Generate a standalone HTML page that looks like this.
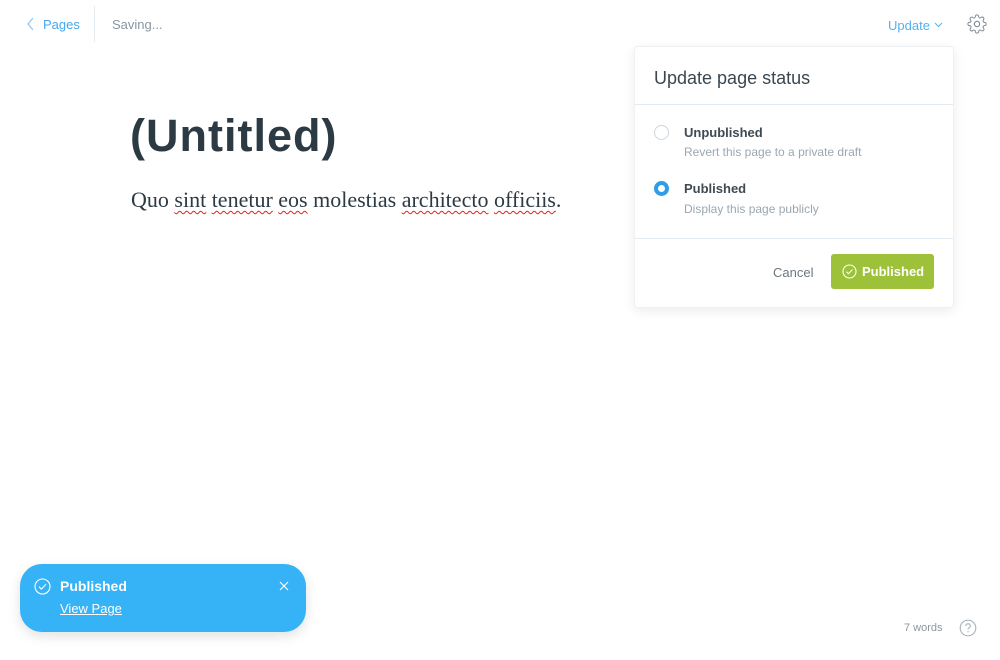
<!DOCTYPE html>
<html><head><meta charset="utf-8"><style>
*{box-sizing:border-box;margin:0;padding:0}
body{width:1000px;height:660px;background:#fff;font-family:"Liberation Sans",sans-serif;position:relative;overflow:hidden;color:#2c3a44}
.abs{position:absolute}
.sq{text-decoration:underline wavy #e02020;text-decoration-thickness:1px;text-underline-offset:3px}
</style></head><body>
<svg class="abs" style="left:26px;top:17px" width="10" height="14" viewBox="0 0 10 14"><path d="M7 1L2 7l5 6" fill="none" stroke="#8cc8f2" stroke-width="1.2"/></svg>
<div class="abs" style="left:43px;top:17px;font-size:13px;color:#45a9ef">Pages</div>
<div class="abs" style="left:94px;top:6px;width:1px;height:36px;background:#e4ecf2"></div>
<div class="abs" style="left:112px;top:17px;font-size:13px;color:#8a97a0">Saving...</div>
<div class="abs" style="left:888px;top:18px;font-size:13px;color:#55b0ef">Update</div>
<svg class="abs" style="left:934px;top:22px" width="9" height="6" viewBox="0 0 9 6"><path d="M1 1l3.5 3.5L8 1" fill="none" stroke="#55b0ef" stroke-width="1"/></svg>
<svg class="abs" style="left:967px;top:14px" width="20" height="20" viewBox="0 0 24 24"><circle cx="12" cy="12" r="3.2" fill="none" stroke="#7c8a94" stroke-width="1.3"/><path d="M19.4 15a1.65 1.65 0 0 0 .33 1.82l.06.06a2 2 0 1 1-2.830 2.83l-.06-.06a1.65 1.65 0 0 0-2.82 1.17V21a2 2 0 1 1-4 0v-.09A1.65 1.65 0 0 0 9 19.4a1.65 1.65 0 0 0-1.82.33l-.06.06a2 2 0 1 1-2.830-2.83l.06-.06A1.650 1.65 0 0 0 3.2 14H3a2 2 0 1 1 0-4h.09A1.65 1.65 0 0 0 4.6 9a1.65 1.65 0 0 0-.33-1.82l-.06-.06a2 2 0 1 1 2.83-2.83l.06.06A1.65 1.65 0 0 0 9 4.6 1.65 1.65 0 0 0 10 3.09V3a2 2 0 1 1 4 0v.09a1.65 1.65 0 0 0 1 1.51 1.65 1.65 0 0 0 1.82-.33l.06-.06a2 2 0 1 1 2.830 2.83l-.06.06A1.65 1.65 0 0 0 19.4 9a1.65 1.65 0 0 0 1.51 1H21a2 2 0 1 1 0 4h-.09a1.65 1.65 0 0 0-1.51 1z" fill="none" stroke="#7c8a94" stroke-width="1.2"/></svg>

<div class="abs" style="left:130px;top:110px;font-size:45px;font-weight:bold;color:#2c3a44;letter-spacing:1px">(Untitled)</div>
<div class="abs" style="left:131px;top:187px;font-family:'Liberation Serif',serif;font-size:22px;color:#2c3a44;white-space:nowrap">Quo <span class="sq">sint</span> <span class="sq">tenetur</span> <span class="sq">eos</span> molestias <span class="sq">architecto</span> <span class="sq">officiis</span>.</div>

<div class="abs" style="left:634px;top:46px;width:320px;height:262px;border:1px solid #eef1f4;border-radius:4px;background:#fff;box-shadow:0 3px 12px rgba(0,0,0,0.08)">
  <div class="abs" style="left:19px;top:21px;font-size:18px;color:#3a4750">Update page status</div>
  <div class="abs" style="left:0;top:57px;width:318px;height:1px;background:#e2ebf2"></div>
  <div class="abs" style="left:19px;top:78px;width:15px;height:15px;border:1px solid #c8d6e0;border-radius:50%"></div>
  <div class="abs" style="left:49px;top:78px;font-size:13px;font-weight:bold;color:#3f4a52">Unpublished</div>
  <div class="abs" style="left:49px;top:98px;font-size:12px;color:#9aa8b2">Revert this page to a private draft</div>
  <div class="abs" style="left:19px;top:134px;width:15px;height:15px;border:4px solid #2f9ee8;border-radius:50%;background:#fff"></div>
  <div class="abs" style="left:49px;top:134px;font-size:13px;font-weight:bold;color:#3f4a52">Published</div>
  <div class="abs" style="left:49px;top:155px;font-size:12px;color:#9aa8b2">Display this page publicly</div>
  <div class="abs" style="left:0;top:191px;width:318px;height:1px;background:#e2ebf2"></div>
  <div class="abs" style="left:138px;top:218px;font-size:13px;color:#6b7780">Cancel</div>
  <div class="abs" style="left:196px;top:207px;width:103px;height:35px;background:#9dc139;border-radius:3px;color:#fff;font-size:13px;font-weight:bold;line-height:35px;padding-left:31px">Published</div>
  <svg class="abs" style="left:207px;top:217px" width="15" height="15" viewBox="0 0 15 15"><circle cx="7.5" cy="7.5" r="6.5" fill="none" stroke="#fff" stroke-width="1.1"/><path d="M4.5 7.7l2 2 4-4.2" fill="none" stroke="#fff" stroke-width="1.1"/></svg>
</div>

<div class="abs" style="left:20px;top:564px;width:286px;height:68px;background:#36b2f7;border-radius:22px;box-shadow:0 4px 12px rgba(0,0,0,0.12)">
  <svg class="abs" style="left:14px;top:14px" width="17" height="17" viewBox="0 0 17 17"><circle cx="8.5" cy="8.5" r="7.5" fill="none" stroke="#fff" stroke-width="1.1"/><path d="M5 8.7l2.4 2.4 4.6-5" fill="none" stroke="#fff" stroke-width="1.1"/></svg>
  <div class="abs" style="left:40px;top:14px;font-size:14px;font-weight:bold;color:#fff">Published</div>
  <div class="abs" style="left:40px;top:37px;font-size:13px;color:#fff;text-decoration:underline">View Page</div>
  <svg class="abs" style="left:259px;top:17px" width="10" height="10" viewBox="0 0 10 10"><path d="M1 1l8 8M9 1l-8 8" stroke="#fff" stroke-width="1.2"/></svg>
</div>

<div class="abs" style="left:904px;top:622px;font-size:11px;color:#8a97a0">7 words</div>
<svg class="abs" style="left:959px;top:619px" width="18" height="18" viewBox="0 0 18 18"><circle cx="9" cy="9" r="7.8" fill="none" stroke="#a8b4bc" stroke-width="1.1"/><path d="M6.8 7a2.2 2.2 0 1 1 3 2c-.6.3-.8.7-.8 1.4" fill="none" stroke="#a8b4bc" stroke-width="1.1"/><circle cx="9" cy="12.8" r=".7" fill="#a8b4bc"/></svg>
</body></html>
